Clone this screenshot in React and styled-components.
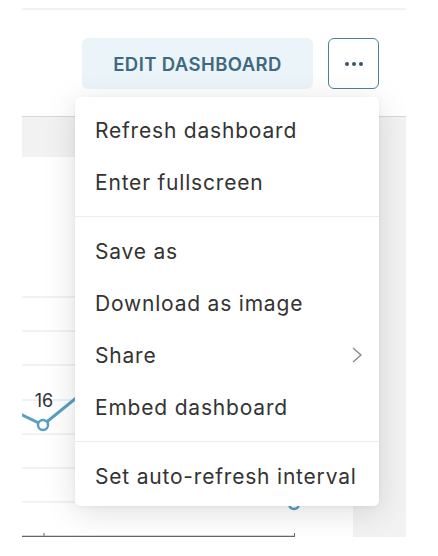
import React from 'react';
import styled, {createGlobalStyle} from 'styled-components';

const GlobalStyle = createGlobalStyle`
    body {
        margin: 0;
        background: #fff;
        font-family: Inter, "Noto Sans", sans-serif;
    }
`;

const Frame = styled.div`
    width: 384px;
    margin: 8px 0 0 22px;
    border-top: 2px solid #f2f2f2;
    overflow: hidden;
`;

const Header = styled.div`
    height: 107px;
    display: flex;
    justify-content: flex-end;
    align-items: flex-start;
    gap: 15px;
    padding: 28px 27px 0 0;
    box-sizing: border-box;
    border-bottom: 1px solid #d6d6d6;
`;

const EditButton = styled.button`
    width: 231px;
    height: 51px;
    border: none;
    border-radius: 6px;
    background: #ebf4f8;
    color: #3d6a80;
    font-family: Inter, sans-serif;
    font-size: 18.5px;
    font-weight: 600;
    letter-spacing: 0.4px;
`;

const MoreWrap = styled.div`
    position: relative;
`;

const MoreButton = styled.button`
    width: 51px;
    height: 51px;
    border: 1.5px solid #4f7f95;
    border-radius: 6px;
    background: #fff;
    display: flex;
    align-items: center;
    justify-content: center;
    padding: 0;
`;

const Menu = styled.ul`
    position: absolute;
    top: calc(100% + 8px);
    right: 0;
    width: 304px;
    margin: 0;
    padding: 7px 0 4px;
    list-style: none;
    background: #fff;
    border-radius: 5px;
    box-shadow: 0 6px 32px rgba(0, 0, 0, 0.13), 0 1px 4px rgba(0, 0, 0, 0.05);
    z-index: 5;
`;

const Item = styled.li`
    height: 52px;
    display: flex;
    align-items: center;
    justify-content: space-between;
    padding: 0 16px 0 20px;
    font-size: 21px;
    letter-spacing: 0.8px;
    color: #333;
    white-space: nowrap;
`;

const Divider = styled.li`
    height: 1px;
    margin: 8px 0;
    background: #ececec;
`;

const Body = styled.div`
    height: 420px;
    display: flex;
    align-items: flex-end;
    background: #f2f2f2;
`;

const Card = styled.div`
    width: 331px;
    height: 380px;
    background: #fff;
`;

const Dots = () => (
    <svg width='22' height='6' viewBox='0 0 22 6'>
        <circle cx='4' cy='3' r='2' fill='#34586b' />
        <circle cx='11' cy='3' r='2' fill='#34586b' />
        <circle cx='18' cy='3' r='2' fill='#34586b' />
    </svg>
);

const Chevron = () => (
    <svg width='12' height='18' viewBox='0 0 12 18'>
        <polyline points='2,2 10,9 2,16' fill='none' stroke='#8a8a8a' strokeWidth='1.4' />
    </svg>
);

const grid = [140, 174, 208, 243, 277, 311, 345];

const Chart = () => (
    <svg width='331' height='380' viewBox='0 0 331 380'>
        {grid.map((y) => (
            <line key={y} x1='0' x2='331' y1={y} y2={y} stroke='#dfe5ec' strokeWidth='1' />
        ))}
        <polyline points='-4,256 21,268 80,220' fill='none' stroke='#5a9fc0' strokeWidth='3' />
        <polyline points='250,330 272,347' fill='none' stroke='#5a9fc0' strokeWidth='3' />
        <circle cx='21' cy='268' r='5' fill='#fff' stroke='#5a9fc0' strokeWidth='2.5' />
        <circle cx='272' cy='347' r='5' fill='#fff' stroke='#5a9fc0' strokeWidth='2.5' />
        <text x='22' y='250' textAnchor='middle' fontFamily='Inter, sans-serif' fontSize='18' fill='#333'>16</text>
        <line x1='0' x2='273' y1='379.5' y2='379.5' stroke='#666' strokeWidth='1.5' />
        <line x1='22' x2='22' y1='376' y2='380' stroke='#666' strokeWidth='1' />
        <line x1='272.5' x2='272.5' y1='376' y2='380' stroke='#666' strokeWidth='1' />
    </svg>
);

const menuItems = [
    ['Refresh dashboard', 'Enter fullscreen'],
    ['Save as', 'Download as image', 'Share', 'Embed dashboard'],
    ['Set auto-refresh interval'],
];

export default function App() {
    return (
        <>
            <GlobalStyle />
            <Frame>
                <Header>
                    <EditButton>EDIT DASHBOARD</EditButton>
                    <MoreWrap>
                        <MoreButton><Dots /></MoreButton>
                        <Menu>
                            {menuItems.map((group, i) => (
                                <React.Fragment key={i}>
                                    {i > 0 && <Divider role='presentation' />}
                                    {group.map((label) => (
                                        <Item key={label}>
                                            {label}
                                            {label === 'Share' && <Chevron />}
                                        </Item>
                                    ))}
                                </React.Fragment>
                            ))}
                        </Menu>
                    </MoreWrap>
                </Header>
                <Body>
                    <Card>
                        <Chart />
                    </Card>
                </Body>
            </Frame>
        </>
    );
}
